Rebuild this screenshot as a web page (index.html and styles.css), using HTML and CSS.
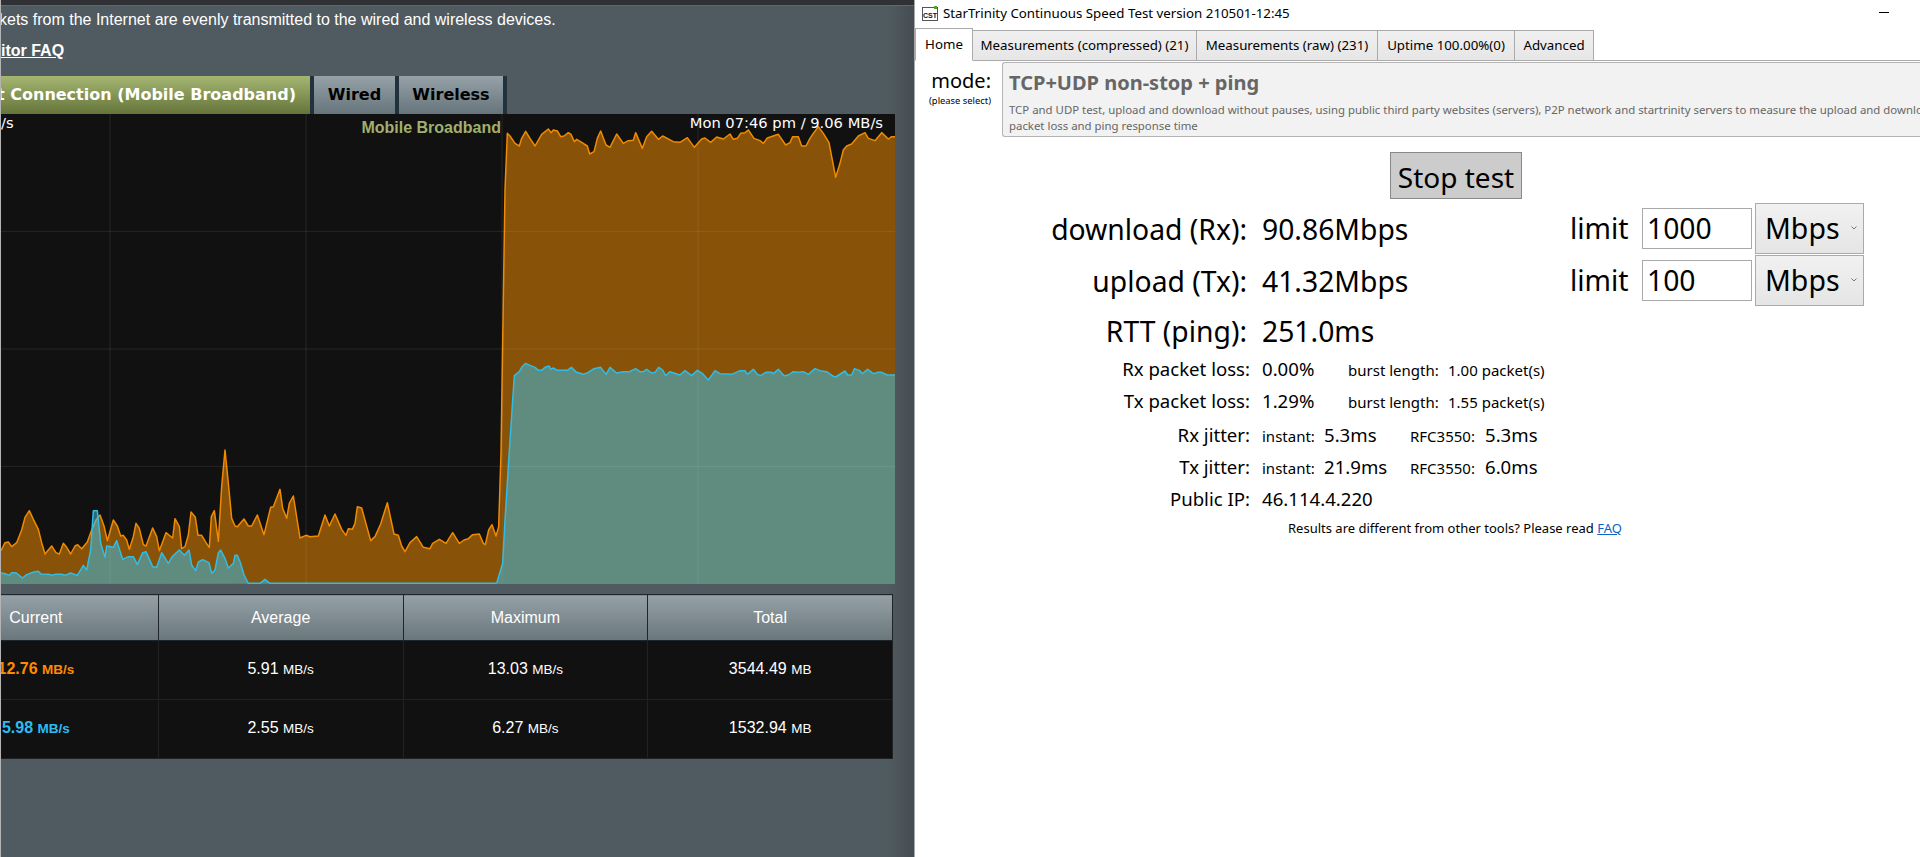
FILE: index.html
```html
<!DOCTYPE html>
<html lang="en">
<head>
    <meta charset="UTF-8">
    <title>Traffic Monitor and Speed Test</title>
    <link rel="stylesheet" href="styles.css">
</head>
<body>

    <div class="router">
        <div class="router-strip"></div>
        <p class="router-note">kets from the Internet are evenly transmitted to the wired and wireless devices.</p>
        <p class="router-faq"><a href="#">itor FAQ</a></p>

        <div class="net-tabs">
            <div class="net-tab net-tab-active">t Connection (Mobile Broadband)</div>
            <div class="net-tab net-tab-wired">Wired</div>
            <div class="net-tab net-tab-wireless">Wireless</div>
        </div>

        <div class="chart">
            <svg class="chart-svg" viewBox="0 342 2685 1410" width="895" height="470">
                <!-- upper series, left part -->
                <g transform="translate(0,1260)">
                    <polygon class="fill-down" points="0,492 3,392 15,368 25,366 35,380 50,368 65,330 75,292 88,272 100,298 115,328 125,368 135,402 155,378 168,398 178,402 190,370 200,382 212,402 225,378 233,374 245,386 262,366 275,330 288,300 300,285 312,318 322,362 340,300 352,318 362,348 370,346 380,360 388,388 400,350 408,310 418,325 430,374 438,378 458,324 470,350 478,392 498,338 518,354 525,296 538,320 545,386 555,380 565,345 573,276 586,292 594,346 605,346 618,368 628,382 634,290 643,272 655,364 665,200 675,90 686,200 695,295 705,318 712,320 732,297 745,318 755,318 772,285 792,344 812,262 820,260 840,208 848,265 860,295 868,250 880,228 900,354 918,346 930,350 955,348 975,285 988,318 1005,282 1025,328 1038,346 1045,326 1057,328 1065,310 1072,260 1085,264 1112,362 1125,350 1142,312 1162,248 1182,342 1195,346 1205,378 1215,395 1230,368 1250,350 1270,382 1290,386 1298,370 1318,358 1338,370 1358,338 1378,370 1392,360 1405,356 1418,344 1438,342 1450,370 1456,374 1466,330 1476,314 1488,348 1496,320 1503,100 1505,-30 1505,492"/>
                    <polyline class="line-down" points="3,392 15,368 25,366 35,380 50,368 65,330 75,292 88,272 100,298 115,328 125,368 135,402 155,378 168,398 178,402 190,370 200,382 212,402 225,378 233,374 245,386 262,366 275,330 288,300 300,285 312,318 322,362 340,300 352,318 362,348 370,346 380,360 388,388 400,350 408,310 418,325 430,374 438,378 458,324 470,350 478,392 498,338 518,354 525,296 538,320 545,386 555,380 565,345 573,276 586,292 594,346 605,346 618,368 628,382 634,290 643,272 655,364 665,200 675,90 686,200 695,295 705,318 712,320 732,297 745,318 755,318 772,285 792,344 812,262 820,260 840,208 848,265 860,295 868,250 880,228 900,354 918,346 930,350 955,348 975,285 988,318 1005,282 1025,328 1038,346 1045,326 1057,328 1065,310 1072,260 1085,264 1112,362 1125,350 1142,312 1162,248 1182,342 1195,346 1205,378 1215,395 1230,368 1250,350 1270,382 1290,386 1298,370 1318,358 1338,370 1358,338 1378,370 1392,360 1405,356 1418,344 1438,342 1450,370 1456,374 1466,330 1476,314 1488,348 1496,320 1503,100 1505,-30"/>
                </g>
                <!-- upper series, right part -->
                <g transform="translate(1440,270)">
                    <polygon class="fill-down" points="65,1482 65,960 75,300 82,130 90,138 105,160 118,168 125,145 137,124 150,145 165,168 185,133 205,117 213,128 220,120 232,123 242,140 252,138 265,128 273,133 283,155 290,148 305,157 322,168 329,192 342,185 352,145 362,123 378,165 390,172 410,132 430,160 445,152 460,151 467,128 487,175 500,140 515,124 535,148 548,138 580,155 600,157 622,143 643,172 665,147 675,144 692,157 710,141 730,147 750,132 760,148 772,145 782,130 795,128 805,120 822,145 840,152 850,160 862,144 895,133 917,165 930,158 938,140 955,140 965,168 978,168 990,145 1000,130 1015,110 1030,130 1047,158 1067,262 1080,220 1090,180 1100,168 1115,162 1135,138 1155,128 1165,145 1185,152 1205,128 1225,147 1235,140 1245,140 1245,1482"/>
                    <polyline class="line-down" points="65,960 75,300 82,130 90,138 105,160 118,168 125,145 137,124 150,145 165,168 185,133 205,117 213,128 220,120 232,123 242,140 252,138 265,128 273,133 283,155 290,148 305,157 322,168 329,192 342,185 352,145 362,123 378,165 390,172 410,132 430,160 445,152 460,151 467,128 487,175 500,140 515,124 535,148 548,138 580,155 600,157 622,143 643,172 665,147 675,144 692,157 710,141 730,147 750,132 760,148 772,145 782,130 795,128 805,120 822,145 840,152 850,160 862,144 895,133 917,165 930,158 938,140 955,140 965,168 978,168 990,145 1000,130 1015,110 1030,130 1047,158 1067,262 1080,220 1090,180 1100,168 1115,162 1135,138 1155,128 1165,145 1185,152 1205,128 1225,147 1235,140 1245,140"/>
                </g>
                <!-- lower series, left part -->
                <g transform="translate(0,1260)">
                    <polygon class="fill-up" points="0,492 3,458 15,461 28,466 35,458 47,458 68,474 78,465 95,458 105,455 115,454 123,462 145,463 158,466 165,463 185,463 195,466 212,459 232,466 250,436 260,450 272,390 280,272 292,272 302,370 315,412 320,378 340,382 350,362 368,418 385,410 400,410 412,434 428,398 438,395 458,440 470,442 485,398 505,430 518,408 538,390 553,406 567,390 575,435 587,452 595,426 608,419 627,428 635,460 645,450 655,398 662,390 675,415 685,444 700,430 705,406 712,406 722,430 732,465 745,490 780,490 795,478 810,490 1490,490"/>
                    <polyline class="line-up" points="3,458 15,461 28,466 35,458 47,458 68,474 78,465 95,458 105,455 115,454 123,462 145,463 158,466 165,463 185,463 195,466 212,459 232,466 250,436 260,450 272,390 280,272 292,272 302,370 315,412 320,378 340,382 350,362 368,418 385,410 400,410 412,434 428,398 438,395 458,440 470,442 485,398 505,430 518,408 538,390 553,406 567,390 575,435 587,452 595,426 608,419 627,428 635,460 645,450 655,398 662,390 675,415 685,444 700,430 705,406 712,406 722,430 732,465 745,490 780,490 795,478 810,490 1490,490"/>
                </g>
                <!-- lower series, right part -->
                <g transform="translate(1440,270)">
                    <polygon class="fill-up" points="50,1480 68,1420 75,1290 85,1130 96,960 103,857 118,845 125,832 137,820 150,826 165,832 175,841 185,841 195,832 207,828 213,838 220,834 232,841 262,841 274,832 290,847 310,853 325,847 342,836 362,832 378,853 390,832 410,849 430,845 448,845 467,836 480,845 490,845 500,838 515,849 525,847 536,832 548,840 557,857 570,845 600,855 615,842 635,857 652,841 668,851 685,870 705,842 720,851 755,853 780,842 795,842 802,853 820,838 832,853 842,857 857,847 875,847 880,851 895,838 912,857 925,855 940,845 955,847 970,845 985,853 1005,836 1020,842 1040,845 1060,859 1067,861 1095,843 1103,855 1115,855 1123,836 1140,842 1147,851 1163,838 1180,851 1195,847 1205,847 1222,855 1245,855 1245,1482 50,1482"/>
                    <polyline class="line-up" points="50,1480 68,1420 75,1290 85,1130 96,960 103,857 118,845 125,832 137,820 150,826 165,832 175,841 185,841 195,832 207,828 213,838 220,834 232,841 262,841 274,832 290,847 310,853 325,847 342,836 362,832 378,853 390,832 410,849 430,845 448,845 467,836 480,845 490,845 500,838 515,849 525,847 536,832 548,840 557,857 570,845 600,855 615,842 635,857 652,841 668,851 685,870 705,842 720,851 755,853 780,842 795,842 802,853 820,838 832,853 842,857 857,847 875,847 880,851 895,838 912,857 925,855 940,845 955,847 970,845 985,853 1005,836 1020,842 1040,845 1060,859 1067,861 1095,843 1103,855 1115,855 1123,836 1140,842 1147,851 1163,838 1180,851 1195,847 1205,847 1222,855 1245,855"/>
                </g>
                <!-- grid -->
                <path class="grid" d="M330 342V1752M918 342V1752M1506 342V1752M2094 342V1752M0 694H2685M0 1047H2685M0 1399H2685"/>
            </svg>
            <span class="chart-unit">/s</span>
            <span class="chart-name">Mobile Broadband</span>
            <span class="chart-time">Mon 07:46 pm / 9.06 MB/s</span>
        </div>

        <table class="traffic">
            <tr>
                <th>Current</th>
                <th>Average</th>
                <th>Maximum</th>
                <th>Total</th>
            </tr>
            <tr>
                <td class="now-down">12.76 <small>MB/s</small></td>
                <td>5.91 <small>MB/s</small></td>
                <td>13.03 <small>MB/s</small></td>
                <td>3544.49 <small>MB</small></td>
            </tr>
            <tr>
                <td class="now-up">5.98 <small>MB/s</small></td>
                <td>2.55 <small>MB/s</small></td>
                <td>6.27 <small>MB/s</small></td>
                <td>1532.94 <small>MB</small></td>
            </tr>
        </table>
    </div>

    <div class="app">
        <div class="titlebar">
            <svg class="app-icon" viewBox="0 0 16 15" width="16" height="15">
                <rect x="0.5" y="1.5" width="15" height="13" fill="#fff" stroke="#555"/>
                <rect x="12" y="0" width="3" height="3" fill="#5a9e3a"/>
                <text x="1" y="12" class="app-icon-text">CST</text>
            </svg>
            <span class="app-title">StarTrinity Continuous Speed Test version 210501-12:45</span>
            <span class="minimize"></span>
        </div>

        <div class="tabs">
            <div class="tab tab-home">Home</div>
            <div class="tab tab-compressed">Measurements (compressed) (21)</div>
            <div class="tab tab-raw">Measurements (raw) (231)</div>
            <div class="tab tab-uptime">Uptime 100.00%(0)</div>
            <div class="tab tab-advanced">Advanced</div>
        </div>

        <div class="mode-row">
            <div class="mode-label">
                <div class="mode-word">mode:</div>
                <div class="mode-hint">(please select)</div>
            </div>
            <div class="mode-box">
                <div class="mode-name">TCP+UDP non-stop + ping</div>
                <div class="mode-desc">TCP and UDP test, upload and download without pauses, using public third party websites (servers), P2P network and startrinity servers to measure the upload and download<br>packet loss and ping response time</div>
            </div>
        </div>

        <button class="stop-button">Stop test</button>

        <div class="speed-row">
            <div class="speed-label">download (Rx):</div>
            <div class="speed-value">90.86Mbps</div>
            <div class="limit-label">limit</div>
            <div class="limit-input">1000</div>
            <div class="unit-select">Mbps<svg class="chevron" viewBox="0 0 6 4" width="6" height="4"><path d="M0.5 0.5L3 3L5.5 0.5"/></svg></div>
        </div>
        <div class="speed-row">
            <div class="speed-label">upload (Tx):</div>
            <div class="speed-value">41.32Mbps</div>
            <div class="limit-label">limit</div>
            <div class="limit-input">100</div>
            <div class="unit-select">Mbps<svg class="chevron" viewBox="0 0 6 4" width="6" height="4"><path d="M0.5 0.5L3 3L5.5 0.5"/></svg></div>
        </div>
        <div class="speed-row rtt-row">
            <div class="speed-label">RTT (ping):</div>
            <div class="speed-value">251.0ms</div>
        </div>

        <div class="stat-row loss-row">
            <div class="stat-label">Rx packet loss:</div>
            <div>0.00%</div>
            <div class="stat-small">burst length:</div>
            <div class="stat-small">1.00 packet(s)</div>
        </div>
        <div class="stat-row loss-row">
            <div class="stat-label">Tx packet loss:</div>
            <div>1.29%</div>
            <div class="stat-small">burst length:</div>
            <div class="stat-small">1.55 packet(s)</div>
        </div>
        <div class="stat-row jitter-row jitter-first">
            <div class="stat-label">Rx jitter:</div>
            <div class="stat-small">instant:</div>
            <div>5.3ms</div>
            <div class="stat-small">RFC3550:</div>
            <div>5.3ms</div>
        </div>
        <div class="stat-row jitter-row">
            <div class="stat-label">Tx jitter:</div>
            <div class="stat-small">instant:</div>
            <div>21.9ms</div>
            <div class="stat-small">RFC3550:</div>
            <div>6.0ms</div>
        </div>
        <div class="stat-row loss-row">
            <div class="stat-label">Public IP:</div>
            <div>46.114.4.220</div>
        </div>

        <p class="results-note">Results are different from other tools? Please read <a href="#">FAQ</a></p>
    </div>

</body>
</html>
```

FILE: styles.css
```css
html, body {
    margin: 0;
    padding: 0;
    height: 857px;
    overflow: hidden;
}

body {
    display: flex;
    font-family: "Noto Sans", sans-serif;
    background-color: #fff;
}

/* left window */
.router {
    width: 913px;
    flex: none;
    overflow: hidden;
    border-left: 1px solid #b4b4b4;
    border-right: 1px solid #a8a8a8;
    background: linear-gradient(to right, #505b61 97%, #454d52);
    font-family: "Liberation Sans", Arial, sans-serif;
    color: #fff;
}

.router-strip {
    height: 5px;
    background-color: #2f3134;
    border-bottom: 1px solid #5f686d;
}

.router-note {
    margin: 1px 0 0 -2px;
    height: 26px;
    line-height: 26px;
    font-size: 16px;
    white-space: nowrap;
}

.router-faq {
    margin: 5px 0 0 0;
    height: 26px;
    line-height: 26px;
    font-size: 16px;
    font-weight: bold;
}

.router-faq a {
    color: #fff;
}

.net-tabs {
    display: flex;
    gap: 4px;
    width: 502px;
    height: 38px;
    margin-top: 12px;
    padding-right: 4px;
    background-color: #22323c;
    font-family: "DejaVu Sans", Verdana, sans-serif;
    font-weight: bold;
    font-size: 16px;
}

.net-tab {
    display: flex;
    align-items: center;
    justify-content: center;
    box-sizing: border-box;
    padding-bottom: 2px;
    color: #000;
    white-space: nowrap;
    background: linear-gradient(#96a2a8, #66747b);
}

.net-tab-active {
    width: 309px;
    justify-content: flex-end;
    padding-right: 14px;
    color: #fff;
    background: linear-gradient(#a5b672, #65743a);
}

.net-tab-wired {
    width: 81px;
}

.net-tab-wireless {
    width: 104px;
}

.chart {
    position: relative;
    width: 894px;
    height: 470px;
    overflow: hidden;
    background-color: #111;
}

.chart-svg {
    display: block;
    margin-left: -1px;
}

.fill-down {
    fill: rgba(255, 147, 0, 0.5);
}

.fill-up {
    fill: rgba(56, 198, 248, 0.5);
}

.line-down,
.line-up {
    fill: none;
    stroke-width: 4.5;
    stroke-linejoin: round;
}

.line-down {
    stroke: #f08a00;
}

.line-up {
    stroke: #2fbce6;
}

.grid {
    fill: none;
    stroke: rgba(255, 255, 255, 0.09);
    stroke-width: 3;
}

.chart-unit,
.chart-time {
    position: absolute;
    top: -1px;
    font-family: "DejaVu Sans", Verdana, sans-serif;
    font-size: 14.7px;
    line-height: 20px;
    color: #fff;
    white-space: nowrap;
}

.chart-unit {
    left: 0;
}

.chart-time {
    right: 12px;
}

.chart-name {
    position: absolute;
    top: 5px;
    right: 394px;
    font-size: 16px;
    line-height: 18px;
    font-weight: bold;
    color: #a0b06c;
}

.traffic {
    width: 980px;
    margin: 10px 0 0 -88px;
    table-layout: fixed;
    border-collapse: collapse;
    border: 1px solid #2c3236;
    font-size: 16px;
}

.traffic th {
    height: 45px;
    padding: 0;
    font-weight: normal;
    color: #fff;
    border: 1px solid #1e262b;
    background: linear-gradient(#95a1a6, #69767c);
}

.traffic td {
    height: 56px;
    padding: 0 0 2px;
    text-align: center;
    background-color: #111;
    border: 1px solid #222;
}

.traffic small {
    font-size: 13.5px;
}

.now-down {
    color: #ff8a00;
    font-weight: bold;
}

.now-up {
    color: #2cbcf4;
    font-weight: bold;
}

/* right window */
.app {
    flex: 1;
    min-width: 0;
    overflow: hidden;
    background-color: #fff;
    color: #000;
}

.titlebar {
    display: flex;
    align-items: center;
    height: 25px;
    padding: 0 0 3px 7px;
    font-size: 13.3px;
}

.app-icon {
    flex: none;
    margin-right: 5px;
    margin-top: 2px;
}

.app-icon-text {
    font-family: "Liberation Sans", sans-serif;
    font-size: 7px;
    font-weight: bold;
    fill: #111;
}

.minimize {
    width: 10px;
    height: 1px;
    margin-left: auto;
    margin-right: 31px;
    background-color: #000;
}

.tabs {
    display: flex;
    align-items: flex-end;
    height: 32px;
    border-bottom: 1px solid #aaa;
    font-size: 13.3px;
}

.tab {
    display: flex;
    align-items: center;
    justify-content: center;
    box-sizing: border-box;
    height: 31px;
    margin-bottom: -1px;
    padding-bottom: 2px;
    border: 1px solid #aaa;
    border-left: none;
    background: linear-gradient(#f0f0f0, #e6e6e6);
    white-space: nowrap;
}

.tab-home {
    width: 58px;
    height: 33px;
    border-left: 1px solid #aaa;
    border-bottom-color: #fff;
    background: #fff;
}

.tab-compressed {
    width: 224px;
}

.tab-raw {
    width: 181px;
}

.tab-uptime {
    width: 137px;
}

.tab-advanced {
    width: 79px;
}

.mode-row {
    display: flex;
    margin-top: 1px;
    height: 75px;
}

.mode-label {
    flex: none;
    width: 76px;
    text-align: right;
}

.mode-word {
    margin-top: 4px;
    font-size: 20px;
    line-height: 30px;
}

.mode-hint {
    font-size: 9.4px;
    line-height: 10px;
    white-space: nowrap;
}

.mode-box {
    flex: 1;
    box-sizing: border-box;
    margin-left: 11px;
    padding: 5px 0 0 6px;
    border: 1px solid #b5b5b5;
    border-right: none;
    border-top-left-radius: 3px;
    border-bottom-left-radius: 3px;
    background-color: #f2f2f2;
    color: #666;
    white-space: nowrap;
    overflow: hidden;
}

.mode-name {
    font-size: 20px;
    line-height: 30px;
    font-weight: bold;
}

.mode-desc {
    margin-top: 4px;
    font-size: 11.4px;
    line-height: 16px;
}

.stop-button {
    display: block;
    box-sizing: border-box;
    width: 132px;
    height: 47px;
    margin: 15px 0 3px 475px;
    padding: 2px 0 0;
    font-family: "Noto Sans", sans-serif;
    font-size: 28px;
    background-color: #ccc;
    border: 1px solid #888;
}

.speed-row {
    display: grid;
    grid-template-columns: 332px 325px 70px 113px 109px;
    align-items: center;
    height: 52px;
    font-size: 28.3px;
}

.speed-label {
    padding-top: 2px;
    text-align: right;
}

.speed-value {
    padding: 2px 0 0 15px;
}

.limit-label {
    margin-left: -2px;
}

.limit-input {
    box-sizing: border-box;
    width: 110px;
    height: 41px;
    padding-left: 4px;
    line-height: 39px;
    background-color: #fff;
    border: 1px solid #aaa;
}

.unit-select {
    position: relative;
    box-sizing: border-box;
    height: 51px;
    padding-left: 9px;
    line-height: 49px;
    font-size: 28.5px;
    background: linear-gradient(#f1f1f1, #e5e5e5);
    border: 1px solid #aaa;
}

.chevron {
    position: absolute;
    top: 22px;
    right: 6px;
    fill: none;
    stroke: #777;
    stroke-width: 1;
}

.rtt-row {
    height: 47px;
}

.stat-row {
    display: grid;
    align-items: baseline;
    height: 32px;
    line-height: 32px;
    font-size: 18.6px;
}

.loss-row {
    grid-template-columns: 347px 86px 100px 1fr;
}

.jitter-row {
    grid-template-columns: 347px 62px 86px 75px 1fr;
}

.jitter-first {
    margin-top: 2px;
}

.stat-label {
    padding-right: 12px;
    text-align: right;
}

.stat-small {
    font-size: 15px;
}

.results-note {
    margin: 0;
    padding-left: 373px;
    height: 26px;
    line-height: 26px;
    font-size: 13px;
}

.results-note a {
    color: #0b63c5;
}
```
